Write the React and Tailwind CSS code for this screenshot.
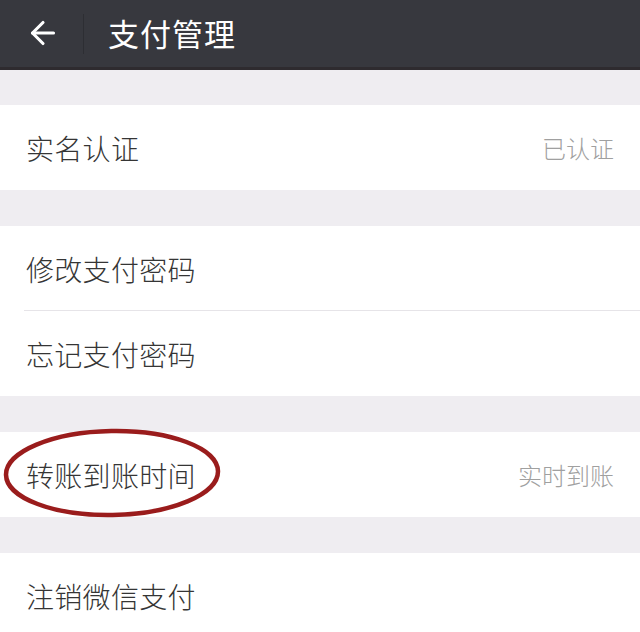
import { ArrowLeft } from 'lucide-react'

const font = { fontFamily: '"Noto Sans CJK SC", "Noto Sans", sans-serif' }

function Row({ label, value, divider }) {
  return (
    <div className="relative h-[85px] bg-white flex items-center pl-[26px] pr-[26px]">
      <span className="flex-1 text-[28px] font-light text-[#353535] tracking-[0.3px]">{label}</span>
      {value && <span className="text-[24px] font-light text-[#a0a0a0]">{value}</span>}
      {divider && <div className="absolute left-[24px] right-0 bottom-0 h-px bg-[#e6e4e8]" />}
    </div>
  )
}

function Gap() {
  return <div className="h-[36px] bg-[#efedf1]" />
}

export default function App() {
  return (
    <div className="w-[640px] h-[632px] overflow-hidden bg-[#efedf1]" style={font}>
      {/* Header */}
      <header className="h-[70px] bg-[#37383e] border-b-[3px] border-[#2e2b2f] flex items-center">
        <div className="w-[83px] flex justify-center pl-[2px] pb-[2px]">
          <ArrowLeft className="w-[36px] h-[36px] text-white" strokeWidth={2.1} />
        </div>
        <div className="w-px h-[40px] bg-[#2d2e33]" />
        <h1 className="ml-[24px] text-[31px] text-white tracking-[1px]">支付管理</h1>
      </header>

      <div className="h-[35px]" />
      <Row label="实名认证" value="已认证" />
      <Gap />
      <Row label="修改支付密码" divider />
      <Row label="忘记支付密码" />
      <Gap />
      <div className="relative">
        <Row label="转账到账时间" value="实时到账" />
        {/* hand-drawn red circle */}
        <svg className="absolute left-[2px] top-[-5px]" width="220" height="94" viewBox="0 0 220 94">
          <ellipse cx="110" cy="46" rx="106" ry="42" fill="none" stroke="#9a1c1c" strokeWidth="4.5" transform="rotate(-1 110 46)" />
        </svg>
      </div>
      <Gap />
      <Row label="注销微信支付" />
    </div>
  )
}
